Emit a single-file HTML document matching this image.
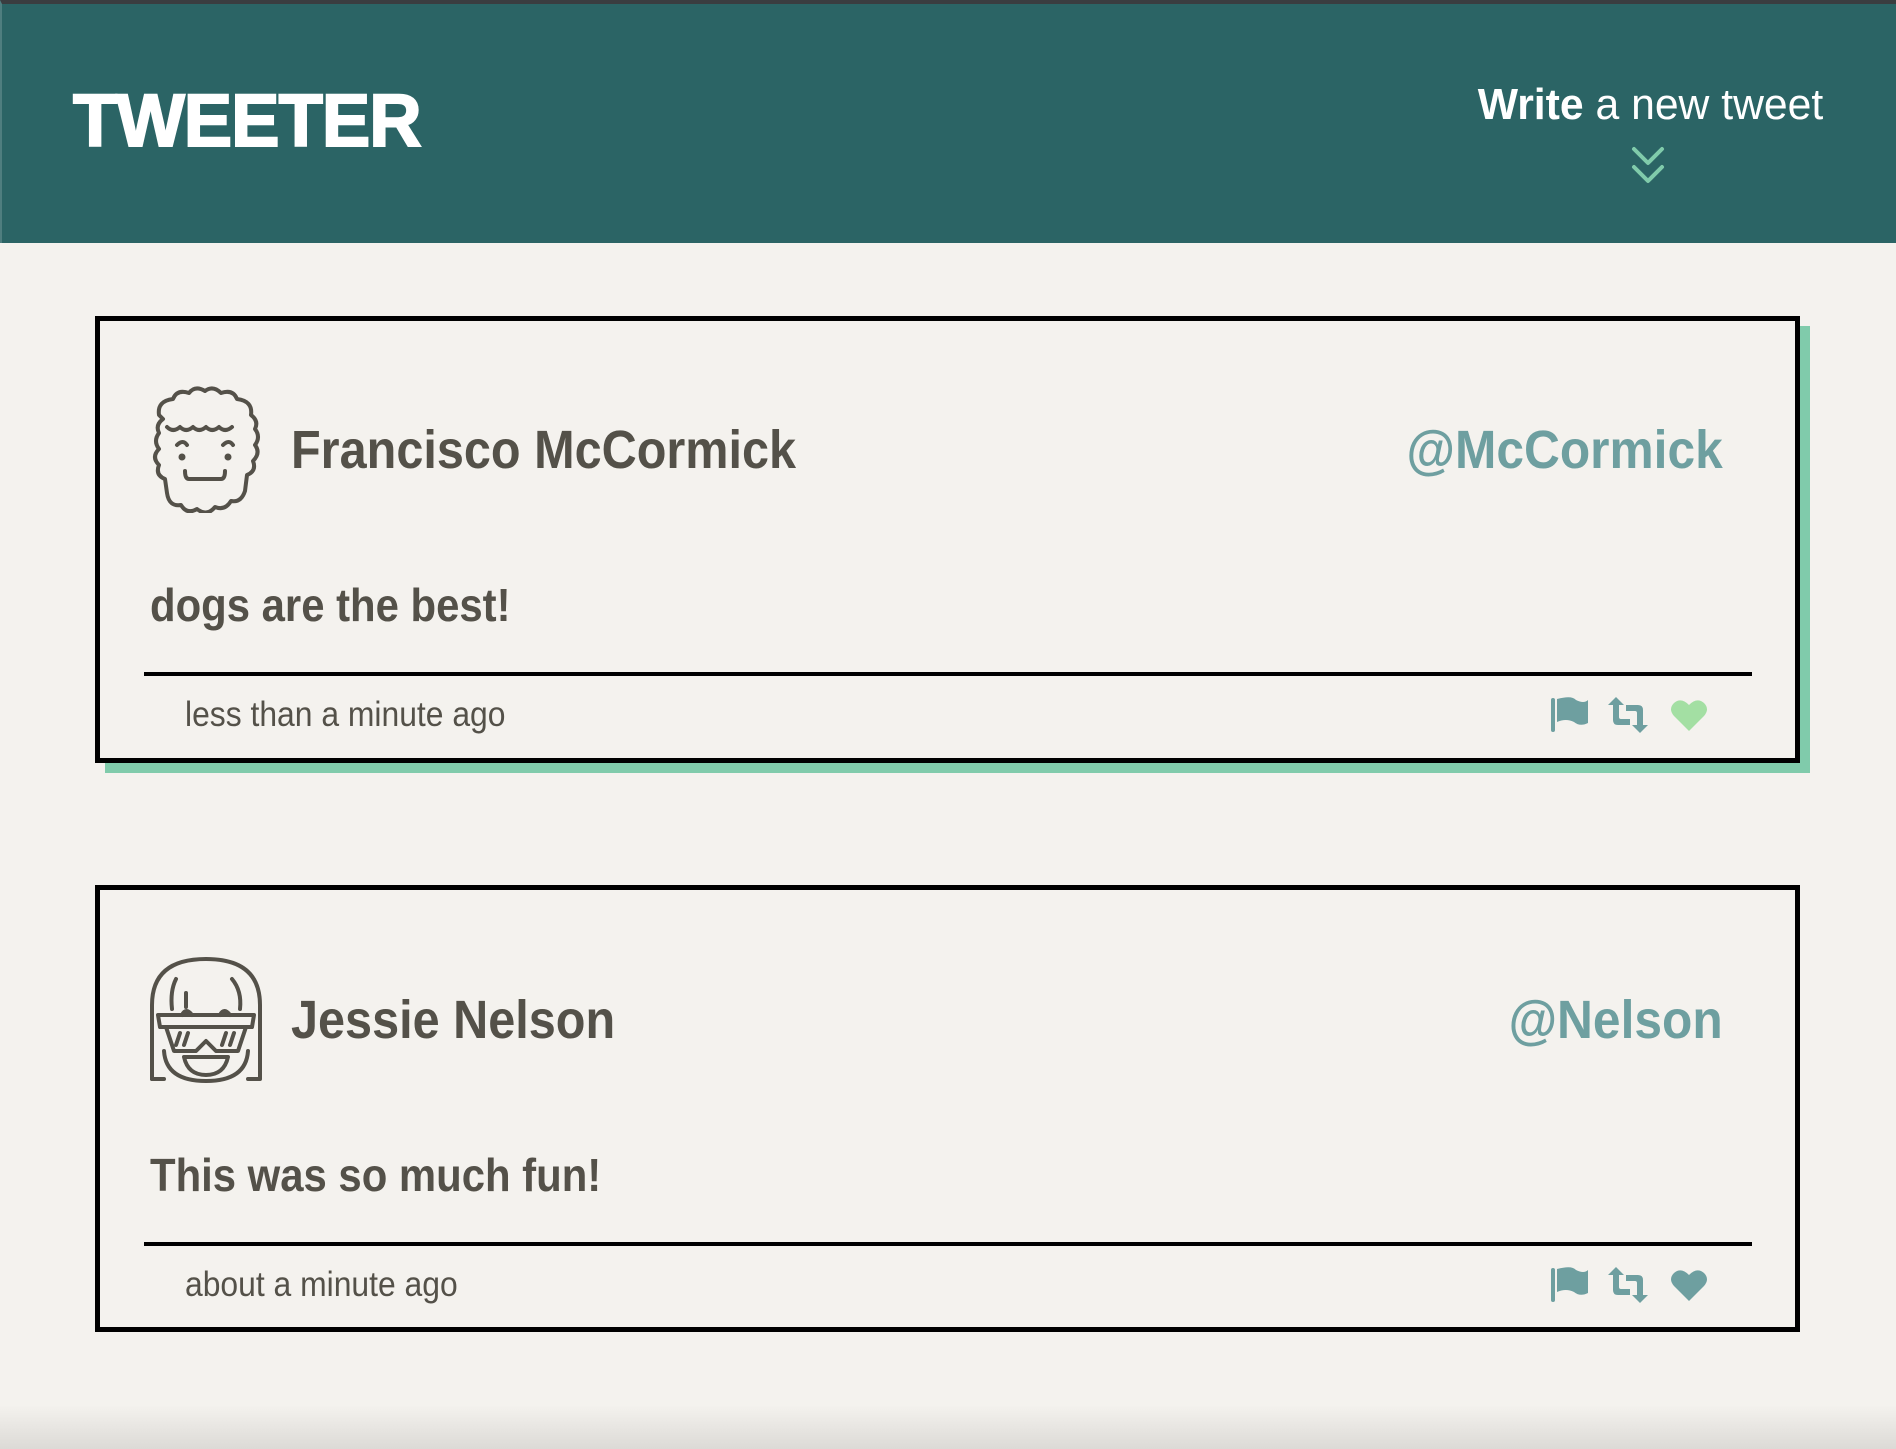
<!DOCTYPE html>
<html><head><meta charset="utf-8"><style>
html,body{margin:0;padding:0}
body{width:1896px;height:1449px;position:relative;overflow:hidden;background:#f4f2ee;font-family:"Liberation Sans",sans-serif}
.hdr{position:absolute;left:0;top:0;width:1896px;height:243px;background:#2b6465;border-top:4px solid #3a3d40;box-sizing:border-box;border-left:2px solid #4f7e7f}
.t{position:absolute;white-space:nowrap;line-height:1;transform-origin:left top}
.card{position:absolute;left:95px;width:1705px;height:447px;border:5px solid #000;box-sizing:border-box}
.sh{position:absolute;background:#80cbab}
.line{position:absolute;left:144px;width:1608px;height:4px;background:#000}
.name{font-size:54px;font-weight:bold;color:#545149;transform:scaleX(.9)}
.handle{font-size:54px;font-weight:bold;color:#6e9fa0;transform:scaleX(.92);transform-origin:right top}
.txt{font-size:46px;font-weight:bold;color:#545149;transform:scaleX(.91)}
.ts{font-size:35px;color:#545149;transform:scaleX(.91)}
</style></head><body>
<div class="hdr"></div>
<div class="t" style="left:73px;top:84px;font-size:74px;font-weight:900;color:#fff;letter-spacing:-1px;transform:scaleX(.98);-webkit-text-stroke:2px #fff">TWEETER</div>
<div class="t" style="right:73px;top:83px;font-size:44px;color:#fff;transform:scaleX(.97);transform-origin:right top"><b>Write</b> a new tweet</div>
<svg style="position:absolute;left:1629px;top:146px" width="38" height="40" viewBox="0 0 38 40"><path d="M5 3 L19 17 L33 3 M5 21 L19 35 L33 21" fill="none" stroke="#80cbab" stroke-width="4" stroke-linecap="round" stroke-linejoin="round"/></svg>

<div class="sh" style="left:105px;top:326px;width:1705px;height:447px"></div>
<div class="card" style="top:316px;background:#f4f2ee"></div>
<div class="card" style="top:885px;background:#f4f2ee"></div>

<svg style="position:absolute;left:145px;top:385px" width="122" height="128" viewBox="0 0 122 128" fill="none" stroke="#545149" stroke-width="4" stroke-linejoin="round" stroke-linecap="round">
<path d="M14 30 q-2-14 14-16 q4-10 16-6 q6-8 16-2 q8-6 16 2 q12-4 16 6 q16 2 14 16 q8 6 4 14 q6 8 0 16 q6 8-2 16 q4 10-6 14 l-2 16 q-4 12-14 10 q-6 10-16 6 q-8 10-18 2 q-10 6-16-4 q-12 2-14-12 l-2-14 q-10-4-6-14 q-8-8 0-16 q-6-8 0-16 q-4-8 4-14z"/>
<path d="M22 42 q6 6 13 0 q6 6 13 0 q6 6 13 0 q6 6 13 0 q6 6 13 0"/>
<path d="M32 60 q6-6 10 0 M78 60 q6-6 10 0"/>
<circle cx="37" cy="72" r="1.5" fill="#545149"/><circle cx="83" cy="72" r="1.5" fill="#545149"/>
<path d="M40 86 q0 8 4 8 l32 0 q4 0 4-8"/>
</svg>
<svg style="position:absolute;left:148px;top:955px" width="116" height="130" viewBox="0 0 116 130" fill="none" stroke="#545149" stroke-width="4" stroke-linejoin="round" stroke-linecap="round">
<path d="M4 124 L4 50 Q4 4 58 4 Q112 4 112 50 L112 124 L100 124"/>
<path d="M16 124 L4 124"/>
<path d="M16 96 Q18 126 58 126 Q98 126 100 96"/>
<path d="M28 24 Q22 36 24 54 M38 38 L38 52 M84 24 Q94 36 92 54"/>
<path d="M10 60 L106 60 L104 72 L12 72Z"/>
<path d="M18 72 L26 96 L48 96 L58 86 L68 96 L90 96 L98 72"/>
<path d="M32 78 L28 90 M40 78 L36 90 M78 78 L74 90 M86 78 L82 90"/>
<path d="M36 102 L80 102 Q76 120 58 120 Q40 120 36 102Z"/>
<path d="M34 60 q4-8 10 0 M72 60 q4-8 10 0"/>
</svg>

<div class="t name" style="left:291px;top:423px">Francisco McCormick</div>
<div class="t handle" style="right:173px;top:423px">@McCormick</div>
<div class="t txt" style="left:150px;top:582px">dogs are the best!</div>
<div class="line" style="top:672px"></div>
<div class="t ts" style="left:185px;top:697px">less than a minute ago</div>

<div class="t name" style="left:291px;top:993px">Jessie Nelson</div>
<div class="t handle" style="right:173px;top:993px">@Nelson</div>
<div class="t txt" style="left:150px;top:1152px">This was so much fun!</div>
<div class="line" style="top:1242px"></div>
<div class="t ts" style="left:185px;top:1267px">about a minute ago</div>

<svg style="position:absolute;left:1550px;top:695px" width="160" height="40" viewBox="0 0 160 40">
<g fill="#6e9fa0"><rect x="1" y="3" width="4" height="34" rx="2"/><path d="M7 4 Q22 0 26 5 Q34 9 38 5 L38 28 Q30 32 24 27 Q16 23 7 27Z"/>
<path d="M58 10 L66 2 L74 10 L69 10 L69 22 Q69 24 71 24 L80 24 L80 30 L68 30 Q63 30 63 25 L63 10Z"/>
<path d="M98 30 L90 38 L82 30 L87 30 L87 18 Q87 16 85 16 L76 16 L76 10 L88 10 Q93 10 93 15 L93 30Z"/></g>
<path fill="#a3dfa3" d="M139 36 L124 21 Q118 14 124 8 Q131 2 139 10 Q147 2 154 8 Q160 14 154 21Z"/>
</svg>
<svg style="position:absolute;left:1550px;top:1265px" width="160" height="40" viewBox="0 0 160 40">
<g fill="#6e9fa0"><rect x="1" y="3" width="4" height="34" rx="2"/><path d="M7 4 Q22 0 26 5 Q34 9 38 5 L38 28 Q30 32 24 27 Q16 23 7 27Z"/>
<path d="M58 10 L66 2 L74 10 L69 10 L69 22 Q69 24 71 24 L80 24 L80 30 L68 30 Q63 30 63 25 L63 10Z"/>
<path d="M98 30 L90 38 L82 30 L87 30 L87 18 Q87 16 85 16 L76 16 L76 10 L88 10 Q93 10 93 15 L93 30Z"/>
<path d="M139 36 L124 21 Q118 14 124 8 Q131 2 139 10 Q147 2 154 8 Q160 14 154 21Z"/></g>
</svg>
<div style="position:absolute;left:0;top:1405px;width:1896px;height:44px;background:linear-gradient(#f4f2ee,#dcdad6)"></div>
</body></html>
